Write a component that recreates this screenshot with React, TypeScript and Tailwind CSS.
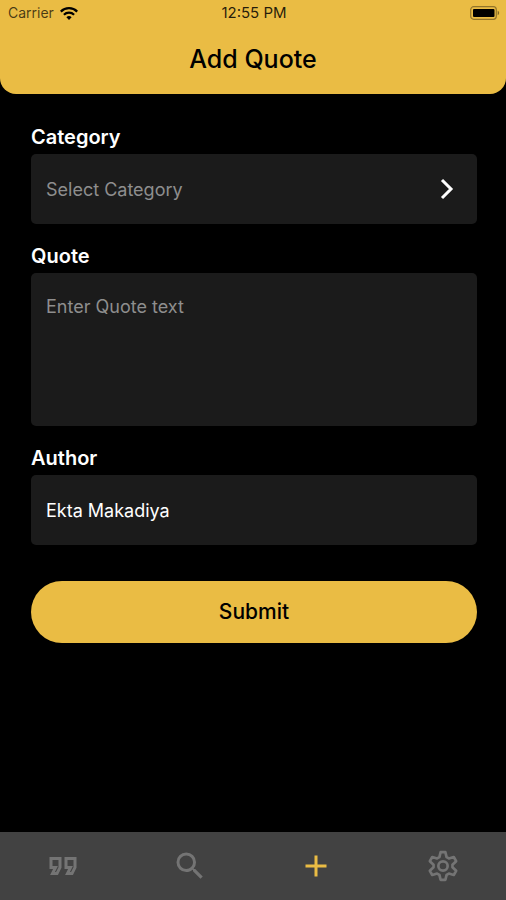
import { useState } from "react";
import type { ReactNode } from "react";
import { MdAdd, MdOutlineFormatQuote, MdSearch } from "react-icons/md";

function WifiIcon() {
  return (
    <svg viewBox="0 0 18 13" className="h-[13px] w-[18px]" fill="none" stroke="currentColor" strokeWidth="2.2" aria-hidden="true">
      <path d="M0.8 4.6a11.6 11.6 0 0 1 16.4 0" />
      <path d="M3.9 7.8a7.2 7.2 0 0 1 10.2 0" />
      <path d="M9 13 6.4 10.3a3.8 3.8 0 0 1 5.2 0Z" fill="currentColor" stroke="none" />
    </svg>
  );
}

function BatteryIcon() {
  return (
    <svg viewBox="0 0 30 14" className="h-[14px] w-[30px]" fill="none" aria-hidden="true">
      <rect x="0.7" y="0.7" width="25.6" height="12.6" rx="3" stroke="#000" strokeOpacity="0.38" strokeWidth="1.2" />
      <rect x="3" y="3" width="21.5" height="8" rx="1" fill="#000" />
      <path d="M27.7 4.8c1.9.7 1.9 3.7 0 4.4Z" fill="#000" fillOpacity="0.45" />
    </svg>
  );
}

function GearIcon({ className }: { className?: string }) {
  return (
    <svg viewBox="-12 -12 24 24" className={className} fill="none" stroke="currentColor" strokeWidth="1.8" strokeLinejoin="round" aria-hidden="true">
      <path d="M-2.4-5.9L-1.6-9.2 1.6-9.2 2.4-5.9 3.91-5.03 7.17-5.99 8.77-3.21 6.31-.87 6.31.87 8.77 3.21 7.17 5.99 3.91 5.03 2.4 5.9 1.6 9.2-1.6 9.2-2.4 5.9-3.91 5.03-7.17 5.99-8.77 3.21-6.31.87-6.31-.87-8.77-3.21-7.17-5.99-3.91-5.03Z" />
      <circle r="3.1" />
    </svg>
  );
}

function Header() {
  return (
    <header className="h-[94px] rounded-b-[16px] bg-[#eabc44] text-black">
      <div className="grid h-[26px] grid-cols-3 items-center pr-[6px] pl-2 leading-[26px]">
        <div className="flex items-center gap-[6px]">
          <span className="text-[14px] text-black/70">Carrier</span>
          <WifiIcon />
        </div>
        <span className="text-center text-[15px] text-black/85">12:55 PM</span>
        <div className="flex justify-end">
          <BatteryIcon />
        </div>
      </div>
      <h1 className="pt-[17px] text-center text-[25px] leading-8 font-medium">Add Quote</h1>
    </header>
  );
}

function Field({ id, label, children }: { id: string; label: string; children: ReactNode }) {
  return (
    <div className="flex flex-col gap-[5px]">
      <label htmlFor={id} className="text-[20px] leading-6 font-semibold text-white">
        {label}
      </label>
      {children}
    </div>
  );
}

const tabs = [
  { name: "Quotes", Icon: MdOutlineFormatQuote },
  { name: "Search", Icon: MdSearch },
  { name: "Add", Icon: MdAdd },
  { name: "Settings", Icon: GearIcon },
];

export default function App() {
  const [author, setAuthor] = useState("Ekta Makadiya");

  return (
    <div className="flex min-h-screen flex-col bg-black font-['Inter',sans-serif]">
      <Header />
      <main className="flex-1 pt-[31px] pr-[29px] pb-8 pl-[31px]">
        <form className="flex flex-col gap-5" onSubmit={(e) => e.preventDefault()}>
          <Field id="category" label="Category">
            <div className="relative">
              <select
                id="category"
                defaultValue=""
                className="h-[70px] w-full appearance-none rounded-[5px] bg-[#1b1b1b] px-[15px] text-[18px] text-[#8e8e8e] outline-none"
              >
                <option value="">Select Category</option>
              </select>
              <svg
                viewBox="0 0 14 22"
                className="pointer-events-none absolute top-6 right-[23px] h-[22px] w-[14px] text-white"
                fill="none"
                stroke="currentColor"
                strokeWidth="3"
                aria-hidden="true"
              >
                <path d="M2 2l9 9-9 9" />
              </svg>
            </div>
          </Field>
          <Field id="quote" label="Quote">
            <textarea
              id="quote"
              placeholder="Enter Quote text"
              className="block h-[153px] w-full resize-none rounded-[5px] bg-[#1b1b1b] px-[15px] py-[22px] text-[18px] leading-6 text-white outline-none placeholder:text-[#8e8e8e]"
            />
          </Field>
          <Field id="author" label="Author">
            <input
              id="author"
              type="text"
              value={author}
              onChange={(e) => setAuthor(e.target.value)}
              className="h-[70px] w-full rounded-[5px] bg-[#1b1b1b] px-[15px] text-[18px] text-white outline-none"
            />
          </Field>
          <button type="submit" className="mt-4 h-[62px] w-full rounded-full bg-[#eabc44] text-[21px] font-medium text-black">
            Submit
          </button>
        </form>
      </main>
      <nav className="grid h-[68px] grid-cols-4 bg-[#424242]">
        {tabs.map(({ name, Icon }) => (
          <button
            key={name}
            type="button"
            aria-label={name}
            className={name === "Add" ? "flex items-center justify-center text-[#eabc44]" : "flex items-center justify-center text-[#747474]"}
          >
            <Icon className="size-9" />
          </button>
        ))}
      </nav>
    </div>
  );
}
